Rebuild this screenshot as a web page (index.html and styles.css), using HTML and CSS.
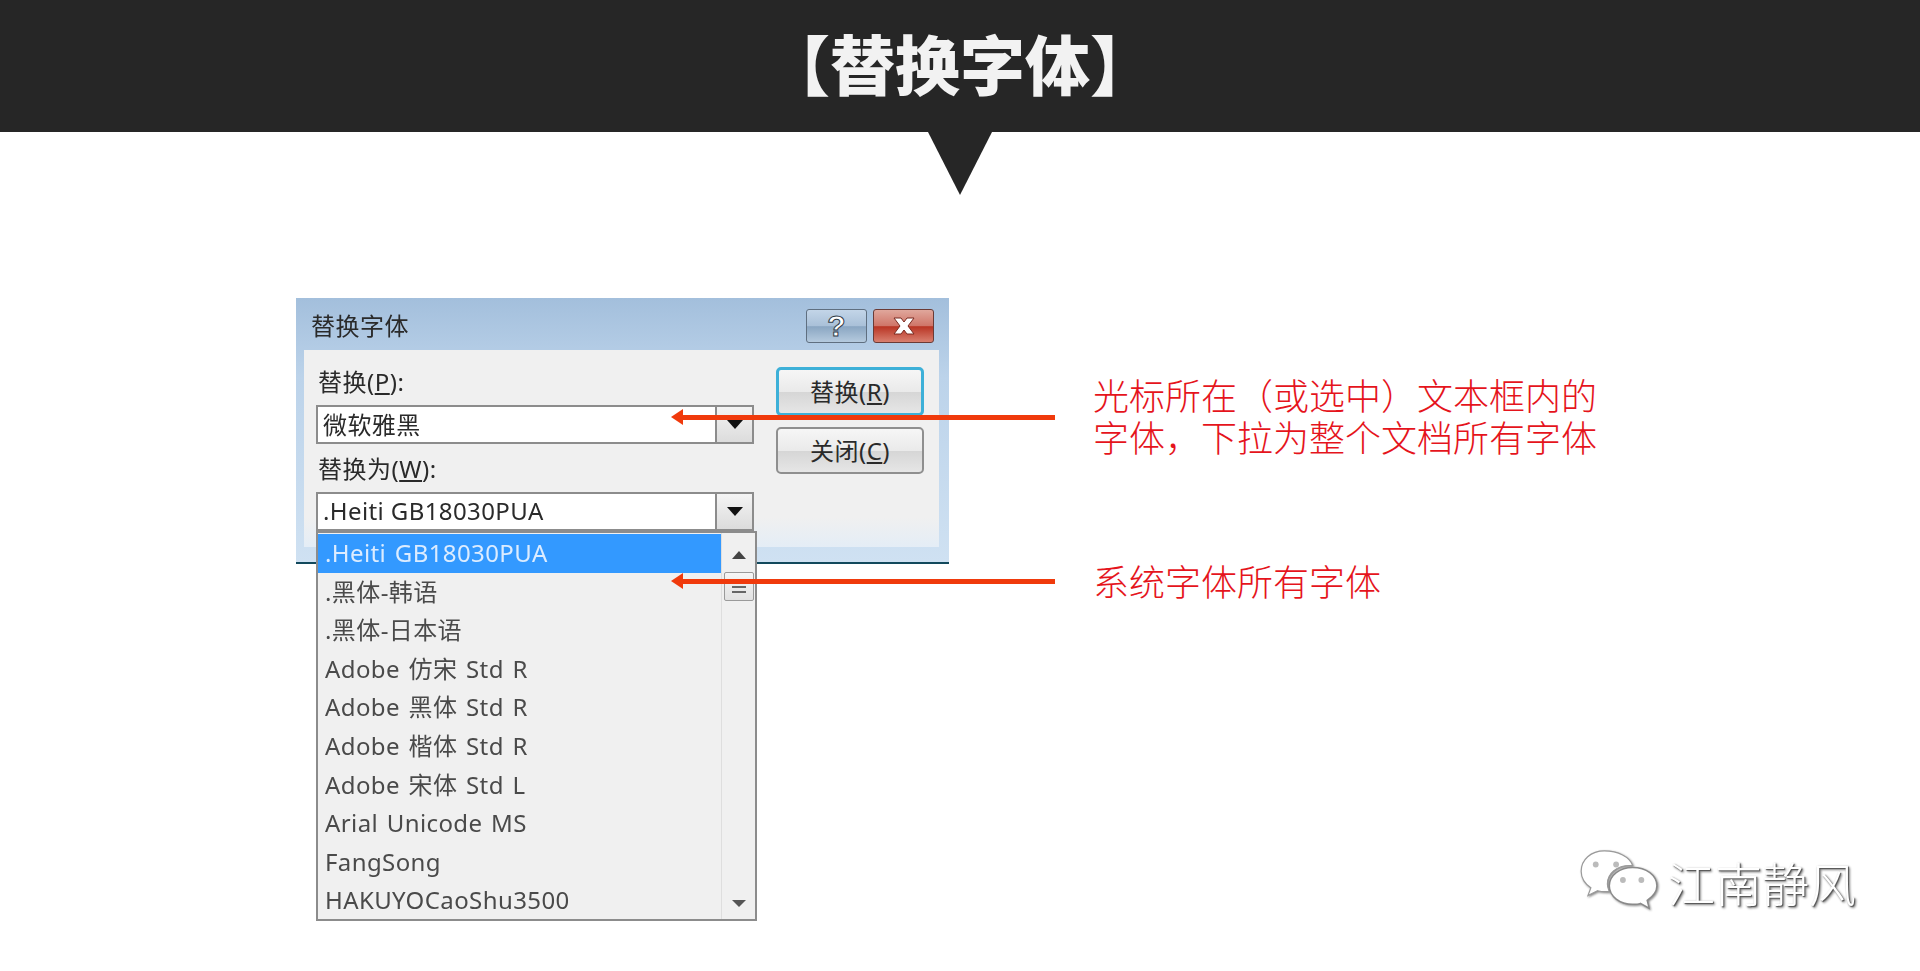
FILE: index.html
```html
<!DOCTYPE html>
<html lang="zh">

<head>
    <meta charset="utf-8">
    <title>替换字体</title>
    <link rel="stylesheet" href="styles.css">
</head>

<body>
    <header class="topbar">
        <h1>【替换字体】</h1>
    </header>

    <main class="slide">
        <section class="dialog">
            <div class="titlebar">
                <span class="dialog-title">替换字体</span>
                <div class="win-buttons">
                    <button class="win-btn help">?</button>
                    <button class="win-btn close">
                        <svg width="24" height="18" viewBox="0 0 24 18">
                            <path d="M2 1h7l3 4 3-4h7l-6 8 6 8h-7l-3-4-3 4H2l6-8z" fill="#fff" stroke="#7a2a20" stroke-width="1"/>
                        </svg>
                    </button>
                </div>
            </div>

            <div class="panel">
                <div class="fields">
                    <label class="field-label">替换(<u>P</u>):</label>
                    <div class="combo">
                        <span class="combo-text">微软雅黑</span>
                        <span class="combo-arrow"><i class="tri-down"></i></span>
                    </div>
                    <label class="field-label second">替换为(<u>W</u>):</label>
                    <div class="combo open">
                        <span class="combo-text">.Heiti GB18030PUA</span>
                        <span class="combo-arrow"><i class="tri-down"></i></span>
                        <div class="dropdown">
                            <ul class="font-list">
                                <li class="valgt">.Heiti GB18030PUA</li>
                                <li>.黑体-韩语</li>
                                <li>.黑体-日本语</li>
                                <li>Adobe 仿宋 Std R</li>
                                <li>Adobe 黑体 Std R</li>
                                <li>Adobe 楷体 Std R</li>
                                <li>Adobe 宋体 Std L</li>
                                <li>Arial Unicode MS</li>
                                <li>FangSong</li>
                                <li>HAKUYOCaoShu3500</li>
                            </ul>
                            <div class="scrollbar">
                                <i class="tri-up small"></i>
                                <div class="thumb"><b></b><b></b><b></b></div>
                                <i class="tri-down small"></i>
                            </div>
                        </div>
                    </div>
                </div>
                <div class="actions">
                    <button class="push-btn focus">替换(<u>R</u>)</button>
                    <button class="push-btn">关闭(<u>C</u>)</button>
                </div>
            </div>
        </section>

        <section class="notes">
            <p class="note first">光标所在（或选中）文本框内的<br>字体，下拉为整个文档所有字体</p>
            <p class="note second">系统字体所有字体</p>
        </section>

        <div class="arrow arrow-one"></div>
        <div class="arrow arrow-two"></div>

        <div class="watermark">
            <svg width="82" height="66" viewBox="0 0 84 68">
                <path d="M26 3C12 3 2 12 2 24c0 7 4 13 10 17l-3 8 10-5c3 1 6 1 9 1h3c-1-3-2-5-2-8 0-11 10-19 23-19 1 0 3 0 3 0C52 9 40 3 26 3z" fill="#fff" stroke="#9a9a9a" stroke-width="1.200"/>
                <path d="M55 20c-13 0-24 8-24 19s11 19 24 19c3 0 6 0 8-1l9 5-2-8c6-4 10-9 10-15 0-11-11-19-25-19z" fill="#fff" stroke="#8a8a8a" stroke-width="1.500"/>
                <circle cx="17" cy="17" r="3" fill="#bbb"/>
                <circle cx="38" cy="17" r="3" fill="#bbb"/>
                <circle cx="45" cy="33" r="3" fill="#bbb"/>
                <circle cx="64" cy="33" r="3" fill="#bbb"/>
            </svg>
            <span class="watermark-text">江南静风</span>
        </div>
    </main>
</body>

</html>
```

FILE: styles.css
```css
* {
    box-sizing: border-box;
}

html,
body {
    margin: 0;
    height: 971px;
    overflow: hidden;
    background: #fff;
}

body {
    font-family: "Noto Sans", "Noto Sans CJK SC", sans-serif;
}

/* top bar */
.topbar {
    position: relative;
    height: 132px;
    background: #262626;
    display: flex;
    justify-content: center;
    align-items: center;
}

.topbar::after {
    content: "";
    position: absolute;
    left: 928px;
    top: 132px;
    border-left: 32px solid transparent;
    border-right: 32px solid transparent;
    border-top: 63px solid #262626;
}

h1 {
    margin: 0 0 8px 0;
    color: #f2f2f2;
    font-size: 65px;
    line-height: 1;
    font-weight: 900;
    font-family: "Noto Sans CJK SC", sans-serif;
}

/* page */
.slide {
    position: relative;
    display: flex;
    padding: 166px 0 0 296px;
}

/* dialog */
.dialog {
    width: 653px;
    height: 266px;
    background: linear-gradient(#a3bfdc, #bcd3ea 30%, #cfe1f2);
    border-bottom: 2px solid #12495c;
    padding: 0 10px 16px 8px;
    color: #2a2a2a;
    flex-shrink: 0;
}

.titlebar {
    height: 52px;
    display: flex;
    justify-content: space-between;
    align-items: center;
    padding: 0 5px 0 7px;
}

.dialog-title {
    font-size: 24px;
    letter-spacing: 0.5px;
    filter: blur(0.4px);
}

.win-buttons {
    display: flex;
    gap: 6px;
    margin-top: 4px;
}

.win-btn {
    width: 61px;
    height: 34px;
    padding: 0;
    border: 1px solid #5f6f80;
    border-radius: 3px;
    display: flex;
    align-items: center;
    justify-content: center;
}

.help {
    background: linear-gradient(#c3d5e8, #a9c0d8 50%, #8aa6c2 52%, #b5cade);
    color: #fff;
    font-size: 30px;
    line-height: 1;
    font-weight: 700;
    font-family: "Liberation Sans", sans-serif;
    -webkit-text-stroke: 1px #2f3b48;
}

.close {
    background: linear-gradient(#e0a79c, #cf7568 50%, #b93524 52%, #d98070);
    border-color: #6b3b36;
}

.panel {
    height: 197px;
    display: flex;
    padding: 14px 15px 0 12px;
    background: linear-gradient(#f0f0f0 85%, #e4edf6);
}

.fields {
    width: 438px;
}

.field-label {
    display: block;
    height: 36px;
    margin-bottom: 5px;
    padding-left: 2px;
    font-size: 24px;
    line-height: 36px;
    letter-spacing: 0.5px;
    filter: blur(0.4px);
}

.field-label.second {
    margin-top: 7px;
}

.combo {
    position: relative;
    height: 39px;
    display: flex;
    align-items: center;
    justify-content: space-between;
    background: #fff;
    border: 2px solid #8c8c8c;
}

.combo-text {
    padding: 0 0 3px 5px;
    font-size: 24px;
    letter-spacing: 0.4px;
    filter: blur(0.4px);
}

.combo-arrow {
    width: 37px;
    height: 100%;
    display: flex;
    align-items: center;
    justify-content: center;
    border-left: 2px solid #8c8c8c;
    background: linear-gradient(#f4f4f4, #dcdcdc);
}

.tri-down {
    width: 0;
    height: 0;
    border-left: 8px solid transparent;
    border-right: 8px solid transparent;
    border-top: 9px solid #111;
}

.tri-up {
    width: 0;
    height: 0;
    border-left: 7px solid transparent;
    border-right: 7px solid transparent;
    border-bottom: 8px solid #444;
}

.tri-down.small {
    border-left-width: 7px;
    border-right-width: 7px;
    border-top: 7px solid #555;
}

/* open list */
.dropdown {
    position: absolute;
    z-index: 2;
    left: -2px;
    top: 37px;
    width: 441px;
    height: 390px;
    display: flex;
    background: #f0f0f0;
    border: 2px solid #8c8c8c;
}

.font-list {
    width: 403px;
    margin: 0;
    padding: 1px 0 0 0;
    list-style: none;
}

.font-list li {
    height: 38.600px;
    padding-left: 7px;
    font-size: 24px;
    line-height: 38px;
    letter-spacing: 0.4px;
    word-spacing: 2px;
    color: #4a4a4a;
    filter: blur(0.3px);
}

.font-list .valgt {
    background: #3399ff;
    color: #dcecff;
}

.scrollbar {
    flex: 1;
    display: flex;
    flex-direction: column;
    align-items: center;
    padding-top: 18px;
    padding-bottom: 12px;
    border-left: 1px solid #dedede;
}

.thumb {
    width: 30px;
    height: 29px;
    margin-top: 13px;
    margin-bottom: auto;
    display: flex;
    flex-direction: column;
    justify-content: center;
    align-items: center;
    gap: 3px;
    background: linear-gradient(#f6f6f6, #e2e2e2);
    border: 1px solid #9a9a9a;
    border-radius: 2px;
}

.thumb b {
    width: 14px;
    height: 2px;
    background: #666;
}

.actions {
    margin-left: 22px;
    padding-top: 3px;
    display: flex;
    flex-direction: column;
    gap: 11px;
}

.push-btn {
    width: 148px;
    height: 47px;
    padding: 0 0 2px 0;
    border: 2px solid #8f8f8f;
    border-radius: 5px;
    background: linear-gradient(#f6f6f6, #eaeaea 50%, #d6d6d6 52%, #e6e6e6);
    font-family: inherit;
    font-size: 24px;
    letter-spacing: 0.5px;
    color: #2a2a2a;
}

.push-btn.focus {
    height: 49px;
    border: 3px solid #3db0d8;
}

/* red notes */
.notes {
    margin-left: 144px;
    padding-top: 75px;
}

.note {
    margin: 0;
    font-size: 36px;
    line-height: 42px;
    color: #e5141c;
    font-family: "Noto Sans CJK SC", sans-serif;
    font-weight: 300;
    white-space: nowrap;
}

.note.second {
    margin-top: 102px;
}

.arrow {
    position: absolute;
    z-index: 3;
    left: 680px;
    width: 375px;
    height: 5px;
    background: #f03a0c;
}

.arrow::before {
    content: "";
    position: absolute;
    left: -9px;
    top: -6px;
    border-top: 8.500px solid transparent;
    border-bottom: 8.500px solid transparent;
    border-right: 12px solid #f03a0c;
}

.arrow-one {
    top: 283px;
}

.arrow-two {
    top: 447px;
}

/* watermark */
.watermark {
    position: absolute;
    right: 64px;
    top: 716px;
    display: flex;
    align-items: center;
    gap: 7px;
    filter: drop-shadow(1px 1px 1px #888);
}

.watermark-text {
    font-size: 47px;
    line-height: 1;
    color: #fff;
    font-weight: 300;
    font-family: "Noto Sans CJK SC", sans-serif;
    text-shadow: 1px 1px 1px #555;
}
```
